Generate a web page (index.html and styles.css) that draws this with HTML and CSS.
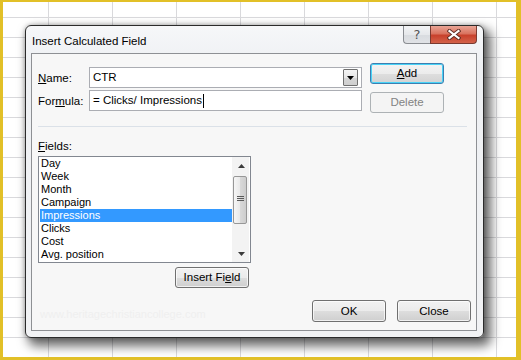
FILE: index.html
```html
<!DOCTYPE html>
<html>
<head>
<meta charset="utf-8">
<link rel="stylesheet" href="styles.css">
</head>
<body>
<div class="screen">
  <div class="dialog">
    <div class="titlebar">
      <span class="title">Insert Calculated Field</span>
      <div class="caption-btns">
        <span class="cap help">?</span>
        <span class="cap close">
          <svg width="14" height="11" viewBox="0 0 14 11">
            <path d="M2.5 2 L11.5 9 M11.5 2 L2.5 9" stroke="#5a2a22" stroke-width="4" stroke-linecap="square" fill="none"/>
            <path d="M2.5 2 L11.5 9 M11.5 2 L2.5 9" stroke="#ffffff" stroke-width="2.2" stroke-linecap="square" fill="none"/>
          </svg>
        </span>
      </div>
    </div>
    <div class="panel">
      <div class="top">
        <div class="form">
          <div class="row">
            <span class="lbl"><u>N</u>ame:</span>
            <div class="box combo">
              <span class="val">CTR</span>
              <span class="drop">
                <svg width="7" height="4" viewBox="0 0 7 4"><path d="M0 0 H7 L3.5 4 Z" fill="#000"/></svg>
              </span>
            </div>
          </div>
          <div class="row">
            <span class="lbl">For<u>m</u>ula:</span>
            <div class="box">
              <span class="val">= Clicks/ Impressions</span><span class="caret"></span>
            </div>
          </div>
        </div>
        <div class="side">
          <button class="btn default"><u>A</u>dd</button>
          <button class="btn disabled">Delete</button>
        </div>
      </div>
      <div class="sep"></div>
      <div class="fields-lbl"><u>F</u>ields:</div>
      <div class="listbox">
        <ul class="items">
          <li>Day</li>
          <li>Week</li>
          <li>Month</li>
          <li>Campaign</li>
          <li class="sel">Impressions</li>
          <li>Clicks</li>
          <li>Cost</li>
          <li>Avg. position</li>
        </ul>
        <div class="scrollbar">
          <span class="arrow">
            <svg width="7" height="4" viewBox="0 0 7 4"><path d="M0 4 H7 L3.5 0 Z" fill="#3c3c3c"/></svg>
          </span>
          <span class="thumb">
            <span class="grip"></span>
          </span>
          <span class="track"></span>
          <span class="arrow">
            <svg width="7" height="4" viewBox="0 0 7 4"><path d="M0 0 H7 L3.5 4 Z" fill="#3c3c3c"/></svg>
          </span>
        </div>
      </div>
      <div class="insert-row">
        <button class="btn">Insert Fi<u>e</u>ld</button>
      </div>
      <div class="bottom">
        <span class="watermark">www.heritagechristiancollege.com</span>
        <button class="btn big">OK</button>
        <button class="btn big">Close</button>
      </div>
    </div>
  </div>
</div>
</body>
</html>
```

FILE: styles.css
```css
* { box-sizing: border-box; }
html, body { margin: 0; padding: 0; }
body {
  width: 521px;
  height: 360px;
  overflow: hidden;
  font-family: "Liberation Sans", Arial, sans-serif;
  font-size: 11px;
  color: #000;
}
.screen {
  width: 521px;
  height: 360px;
  border-style: solid;
  border-color: #e2c028;
  border-width: 2px 5px 3px 3px;
  background-color: #ffffff;
  background-image:
    linear-gradient(to right, transparent 63px, #d9d9dc 63px),
    linear-gradient(to bottom, transparent 19px, #d9d9dc 19px);
  background-size: 64px 20px;
  background-position: -18px 16px;
  padding: 23px 0 0 22px;
}
.dialog {
  width: 459px;
  height: 313px;
  border: 1px solid #2b2b2b;
  border-radius: 6px;
  background: linear-gradient(to bottom, #f6f7f9, #eef0f3 40px, #f1f2f4);
  box-shadow: 5px 6px 11px 2px rgba(0,0,0,0.6), 0 0 4px rgba(0,0,0,0.25);
  padding: 0 6px 6px 5px;
  display: flex;
  flex-direction: column;
}
.titlebar {
  height: 27px;
  display: flex;
  align-items: flex-start;
  justify-content: space-between;
}
.title {
  margin-top: 7px;
  margin-left: 1px;
  line-height: 16px;
  font-size: 11.5px;
}
.caption-btns {
  display: flex;
}
.cap {
  height: 18px;
  display: flex;
  align-items: center;
  justify-content: center;
}
.help {
  width: 27px;
  border: 1px solid #8a8d92;
  border-top: none;
  border-right: none;
  border-radius: 0 0 0 4px;
  background: linear-gradient(to bottom, #f2f3f5, #e6e8eb 50%, #d8dbdf 51%, #e0e2e6);
  color: #555;
  font-size: 13px;
  font-family: "DejaVu Sans", sans-serif;
  line-height: 16px;
}
.close {
  width: 47px;
  border: 1px solid #7a3a30;
  border-top: none;
  border-radius: 0 0 4px 0;
  background: linear-gradient(to bottom, #e9a596, #d9735f 45%, #c8412c 55%, #d3624a);
}
.panel {
  flex: 1;
  border: 1px solid #8e9094;
  background: #f7f7f7;
  display: flex;
  flex-direction: column;
  padding: 9px 5px 8px 6px;
}
.top {
  display: flex;
  align-items: flex-start;
}
.form {
  margin-top: 4px;
  display: flex;
  flex-direction: column;
  gap: 2px;
}
.row {
  display: flex;
  align-items: center;
}
.lbl {
  width: 51px;
  font-size: 11.5px;
}
.box {
  width: 273px;
  height: 21px;
  border: 1px solid #abadb3;
  background: #fff;
  display: flex;
  align-items: center;
  padding-left: 3px;
  font-size: 11.5px;
}
.val { line-height: 15px; }
.caret {
  width: 1px;
  height: 14px;
  background: #000;
  margin-left: 1px;
}
.combo { justify-content: space-between; padding-right: 3px; }
.drop {
  width: 15px;
  height: 17px;
  border: 1px solid #707070;
  border-radius: 1px;
  background: linear-gradient(to bottom, #f4f4f4, #e6e6e6 50%, #d6d6d6 51%, #cfcfcf);
  display: flex;
  align-items: center;
  justify-content: center;
}
.side {
  margin-left: 8px;
  display: flex;
  flex-direction: column;
  gap: 8px;
}
.btn {
  font-family: inherit;
  font-size: 11.5px;
  color: #000;
  width: 74px;
  height: 21px;
  padding: 0;
  border: 1px solid #707070;
  border-radius: 3px;
  background: linear-gradient(to bottom, #f2f2f2, #ebebeb 50%, #dddddd 51%, #cfcfcf);
  box-shadow: inset 0 0 0 1px rgba(255,255,255,0.7);
  line-height: 17px;
}
.btn.default {
  border-color: #3c7fb1;
  background: linear-gradient(to bottom, #f3f3f3, #ececec 50%, #dedede 51%, #d3d3d3);
  box-shadow: inset 0 0 0 1px #48d3f7;
}
.btn.disabled {
  border-color: #adb2b5;
  background: #f4f4f4;
  box-shadow: none;
  color: #838383;
}
.sep {
  margin-top: 13px;
  height: 1px;
  background: #dbe1e8;
  margin-right: 4px;
}
.fields-lbl {
  margin-top: 11px;
  line-height: 16px;
  font-size: 11.5px;
}
.listbox {
  margin-top: 2px;
  width: 213px;
  height: 107px;
  border: 1px solid #828790;
  background: #fff;
  display: flex;
}
.items {
  list-style: none;
  margin: 0;
  padding: 0;
  width: 193px;
}
.items li {
  height: 13px;
  line-height: 13px;
  padding-left: 1px;
  margin-left: 1px;
  white-space: nowrap;
}
.items li.sel {
  background: #3399ff;
  color: #fff;
}
.scrollbar {
  width: 17px;
  display: flex;
  flex-direction: column;
  background: #f3f3f3;
}
.arrow {
  height: 17px;
  display: flex;
  align-items: center;
  justify-content: center;
  padding-left: 1px;
}
.thumb {
  margin: 2px 2px 0 1px;
  height: 48px;
  border: 1px solid #979797;
  border-radius: 2px;
  background: linear-gradient(to right, #f6f6f6, #e9e9e9 50%, #d9d9d9 51%, #cdcdcd);
  display: flex;
  align-items: center;
  justify-content: center;
}
.grip {
  width: 7px;
  height: 6px;
  background: repeating-linear-gradient(to bottom, #5a5a5a 0, #5a5a5a 1px, transparent 1px, transparent 2px);
  margin-top: -2px;
}
.track { flex: 1; }
.insert-row {
  width: 213px;
  display: flex;
  justify-content: flex-end;
  padding-right: 2px;
  margin-top: 4px;
}
.bottom {
  margin-top: auto;
  display: flex;
  align-items: center;
  gap: 11px;
}
.watermark {
  margin-right: auto;
  margin-left: 2px;
  color: #efefef;
  font-size: 11px;
  margin-top: 6px;
}
.btn.big { height: 22px; }
```
